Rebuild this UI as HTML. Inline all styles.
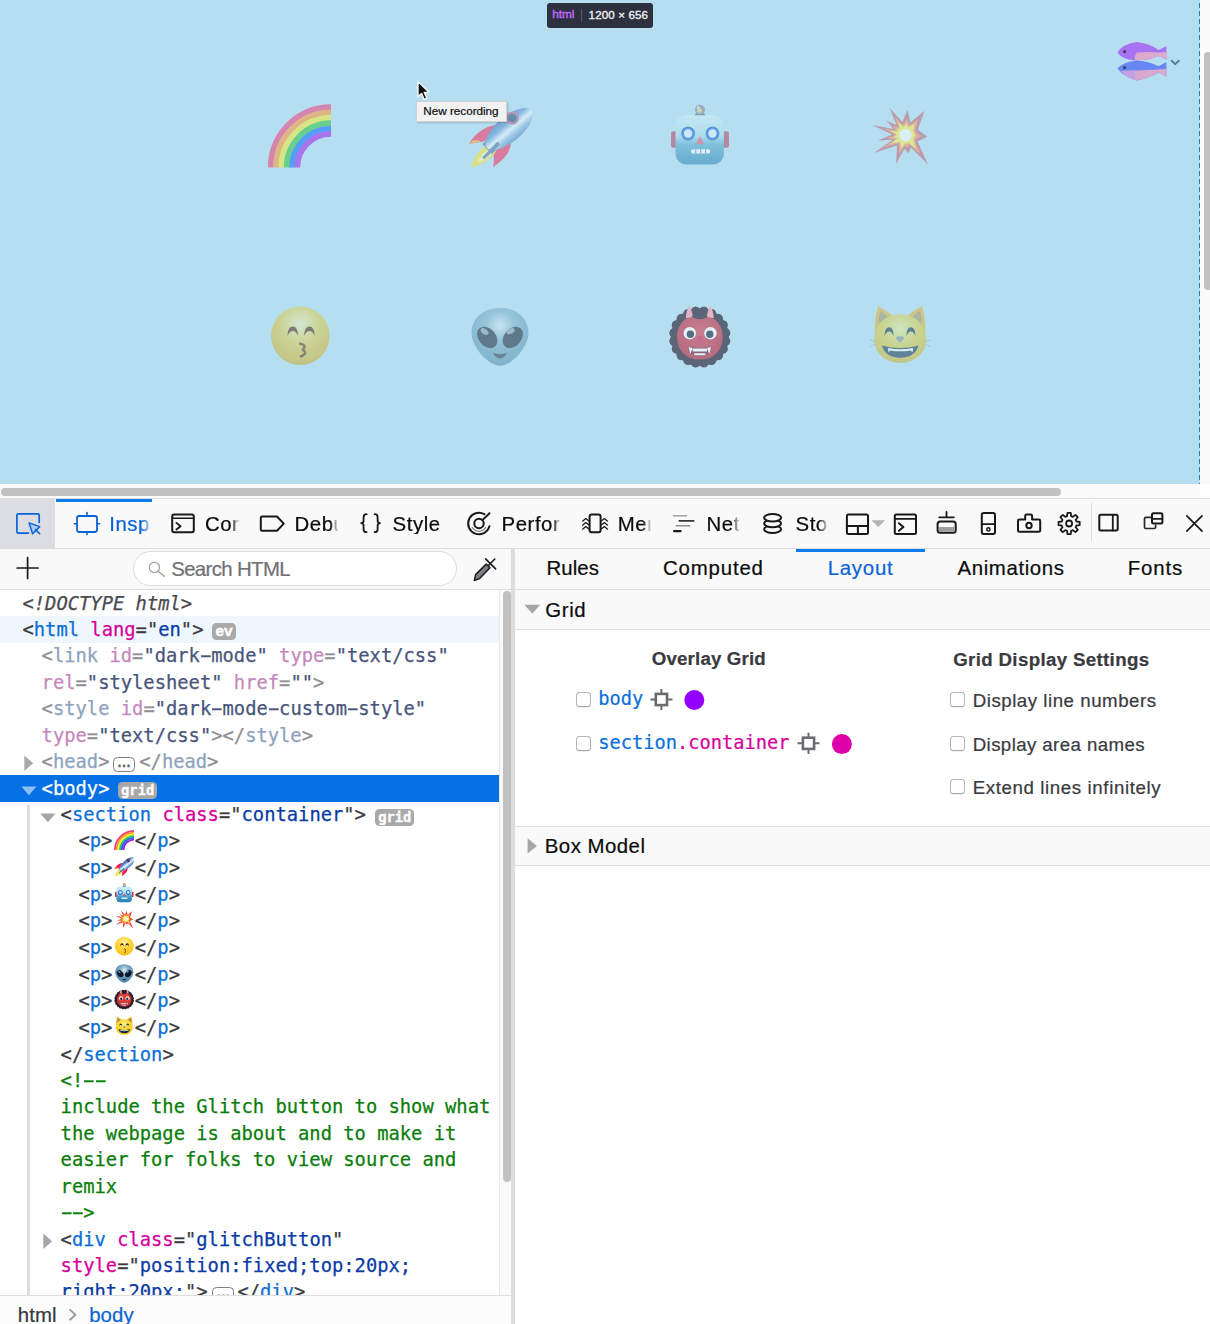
<!DOCTYPE html>
<html lang="en"><head><meta charset="utf-8"><title>Firefox DevTools - CSS Grid layout panel</title>
<style>
html,body{margin:0;padding:0}
body{width:1210px;height:1324px;position:relative;overflow:hidden;background:#fff;font-family:"Liberation Sans",sans-serif;color:#0c0c0d}
div,svg,span{box-sizing:border-box}
.a{position:absolute}
.t{position:absolute;white-space:nowrap;-webkit-text-stroke:.22px}
.m{font-family:"DejaVu Sans Mono","Liberation Mono",monospace}
.ln{position:absolute;white-space:nowrap;font-family:"DejaVu Sans Mono","Liberation Mono",monospace;font-size:18.8px;line-height:26px;height:26px;color:#3b3b41;-webkit-text-stroke:.25px}
.ln .g{color:#0a6fd8}.ln .n{color:#d8009c}.ln .v{color:#0a3aa6}
.ln.dim{color:#8f8f95}.ln.dim .g{color:#8da3bd}.ln.dim .n{color:#c588bc}.ln.dim .v{color:#48557a}
.ln.sel,.ln.sel .g{color:#fff}
.ln.cm{color:#0a7d0a}
.ln .h{display:inline-block;transform:scaleX(1.9)}
.ln.dt{font-style:italic;color:#4a4a50}
.em{display:inline-block;width:22.4px;height:22px;vertical-align:-4.5px;position:relative}
.em svg{position:absolute;left:1.2px;top:-.4px}
.em i{position:absolute;left:0;top:0;width:22px;height:22px;overflow:hidden;opacity:0;font-size:12px;line-height:22px;font-style:normal}
.bdg{position:absolute;background:#a9a9a9;color:#fff;border-radius:4.5px;font-weight:bold;text-align:center;white-space:nowrap}
.dots{position:absolute;border:1px solid #7d7d82;border-radius:4.5px;background:#fff;color:#5e5e64;font-family:"Liberation Sans",sans-serif;font-weight:bold;font-size:14px;line-height:9.4px;text-align:center;-webkit-text-stroke:.25px;overflow:hidden}
.cb{position:absolute;width:14.6px;height:14.8px;border:1px solid #b6b6b6;border-bottom-color:#a6a6a6;border-radius:3.5px;background:#fff;box-shadow:0 .5px .5px rgba(0,0,0,.12)}
</style></head><body>
<div class="a" style="left:0;top:0;width:1200px;height:484px;background:#fff;overflow:hidden">
<div class="a" style="left:0;top:0;width:1200px;height:484px;background:rgba(132,202,230,.6)"></div>
<div class="a" style="left:0;top:0;width:1200px;height:484px">
<svg class="a" style="left:268px;top:103.5px;opacity:0.56" width="64" height="64" viewBox="0 0 64 64"><path d="M2.67 63.5 A60.33 60.33 0 0 1 63 3.17" fill="none" stroke="#f0407c" stroke-width="5.63"/><path d="M8.00 63.5 A55.00 55.00 0 0 1 63 8.50" fill="none" stroke="#ff962f" stroke-width="5.63"/><path d="M13.33 63.5 A49.67 49.67 0 0 1 63 13.83" fill="none" stroke="#f4ea30" stroke-width="5.63"/><path d="M18.67 63.5 A44.33 44.33 0 0 1 63 19.17" fill="none" stroke="#2fc440" stroke-width="5.63"/><path d="M24.00 63.5 A39.00 39.00 0 0 1 63 24.50" fill="none" stroke="#0a6cff" stroke-width="5.63"/><path d="M29.33 63.5 A33.67 33.67 0 0 1 63 29.83" fill="none" stroke="#a020e8" stroke-width="5.63"/></svg>
<svg class="a" style="left:468px;top:103.5px;opacity:0.5" width="64" height="64" viewBox="0 0 64 64"><defs><linearGradient id="g1" gradientUnits="userSpaceOnUse" x1="41" y1="12.4" x2="41" y2="37.6"><stop offset="0" stop-color="#2f64b0"/><stop offset=".3" stop-color="#5f94d4"/><stop offset=".55" stop-color="#f4fbff"/><stop offset=".75" stop-color="#8fb8e0"/><stop offset="1" stop-color="#3f78c0"/></linearGradient></defs><path d="M20 40 Q5 50 3.4 63.4 Q17 60.5 27.5 49 Z" fill="#ffe21a"/><path d="M21 44 Q12 51 9.5 58.5 Q18 56 24.5 49.5 Z" fill="#fff9a8"/><path d="M27 21 Q10 24 0.6 40.6 Q8 37.6 14 38 Q19 34.6 24.5 35.5 Z" fill="#ff1850"/><path d="M0.6 40.6 Q8 37.6 14 38 Q9 35.5 5.5 36 Z" fill="#ffb020"/><path d="M43 37 Q43 52 25 63 Q26.5 56.5 25.6 51 Q29.5 47 28.6 41.5 Z" fill="#ff1850"/><path d="M18.4 35.4 L28.8 45.6 L24 50 L14.4 40.2 Z" fill="#5d6f88"/><ellipse cx="41" cy="25" rx="29" ry="12.6" transform="rotate(-40 41 25)" fill="url(#g1)"/><circle cx="44.4" cy="14" r="5.4" fill="#0a4668" stroke="#c0507c" stroke-width="2.4"/><path d="M29.5 37.5 L14 53.4 L16.6 55 L32 40.4 Z" fill="#4a6a98"/></svg>
<svg class="a" style="left:668px;top:103.5px;opacity:0.52" width="64" height="64" viewBox="0 0 64 64"><defs><linearGradient id="g2" x1="0" y1="0" x2="0" y2="1"><stop offset="0" stop-color="#d2f0f8"/><stop offset=".42" stop-color="#a8dcee"/><stop offset=".6" stop-color="#4fa4cc"/><stop offset="1" stop-color="#1f7eb0"/></linearGradient></defs><path d="M25 13.5 L28 9.3 H36 L39 13.5 Z" fill="#2f5f88"/><circle cx="32" cy="5.7" r="5" fill="#8c7f8c"/><circle cx="31.4" cy="6.6" r="2.4" fill="#e8d46a"/><circle cx="30.4" cy="3.6" r="1.5" fill="#d9d5de"/><rect x="3" y="27.2" width="7" height="16.6" rx="2.4" fill="#b43a56"/><rect x="54" y="27.2" width="7" height="16.6" rx="2.4" fill="#b43a56"/><rect x="7.5" y="11.3" width="48.4" height="49.1" rx="11" fill="url(#g2)"/><circle cx="20.1" cy="29.5" r="6.9" fill="#0e5a8a"/><circle cx="20.1" cy="29.5" r="6.1" fill="#0a5cff"/><circle cx="20.1" cy="29.5" r="4.2" fill="#e6f4ff"/><circle cx="44.5" cy="29.5" r="6.9" fill="#0e5a8a"/><circle cx="44.5" cy="29.5" r="6.1" fill="#0a5cff"/><circle cx="44.5" cy="29.5" r="4.2" fill="#e6f4ff"/><path d="M32 32 L36.2 40.2 H27.8 Z" fill="#d8566a"/><rect x="23" y="45.3" width="19.2" height="4.3" rx="2" fill="#ffffff"/><rect x="27.2" y="45.3" width="1.1" height="4.3" fill="#4f84ac"/><rect x="32.1" y="45.3" width="1.1" height="4.3" fill="#4f84ac"/><rect x="37" y="45.3" width="1.1" height="4.3" fill="#4f84ac"/></svg>
<svg class="a" style="left:868px;top:103.5px;opacity:0.5" width="64" height="64" viewBox="0 0 64 64"><path d="M21.4 3.7 L34.5 18.1 L39.5 5.7 L42.4 18.6 L56.5 6.8 L49.9 25.7 L59.4 32.8 L49.5 37.6 L60.1 60.6 L42.9 43.6 L40.5 49.5 L36.5 44.7 L28.0 59.9 L29.0 41.6 L5.9 49.0 L24.9 35.8 L9.9 36.5 L24.1 30.5 L4.2 20.9 L25.6 25.1 L18.1 16.6 L28.6 21.1 Z" fill="#c45a6c"/><path d="M26.9 13.0 L35.2 21.0 L38.9 14.4 L41.4 21.4 L50.1 15.1 L47.2 26.9 L52.0 32.3 L46.8 36.2 L52.5 50.6 L41.7 40.8 L39.5 43.3 L36.7 41.7 L31.3 50.1 L30.9 39.3 L16.7 42.9 L27.7 34.8 L19.3 34.7 L27.1 30.6 L15.6 24.4 L28.2 26.4 L24.7 21.6 L30.6 23.4 Z" fill="#ff8a50"/><path d="M30.1 18.5 L35.7 23.0 L38.5 19.5 L40.6 23.4 L46.3 20.0 L45.3 27.8 L47.6 31.9 L45.0 35.2 L48.0 44.7 L40.9 38.9 L38.9 39.6 L36.9 39.6 L33.2 44.4 L32.2 37.7 L23.0 39.4 L29.7 34.1 L24.9 33.6 L29.2 30.7 L22.2 26.5 L30.1 27.4 L28.6 24.5 L32.0 24.9 Z" fill="#fff23a"/><circle cx="37.6" cy="31.2" r="6.2" fill="#ffffff"/></svg>
<svg class="a" style="left:268px;top:304px;opacity:0.5" width="64" height="64" viewBox="0 0 64 64"><defs><radialGradient id="g3" cx=".5" cy=".3" r=".75"><stop offset="0" stop-color="#eef0b4"/><stop offset=".45" stop-color="#e0c83a"/><stop offset=".85" stop-color="#d4ae20"/><stop offset="1" stop-color="#b08414"/></radialGradient></defs><circle cx="32.3" cy="31.8" r="29.3" fill="url(#g3)"/><path d="M19.4 32 Q19.8 22.4 24.8 22.4 Q29.8 22.4 30.200000000000003 32 Q27.8 27 24.8 27 Q21.8 27 19.4 32 Z" fill="#4a1c00"/><path d="M36.0 32 Q36.4 22.4 41.4 22.4 Q46.4 22.4 46.8 32 Q44.4 27 41.4 27 Q38.4 27 36.0 32 Z" fill="#4a1c00"/><path d="M32 39.6 Q39.4 41 34.8 45.8 Q40.4 49.6 32.8 52.4" fill="none" stroke="#5a2600" stroke-width="2.4" stroke-linecap="round" stroke-linejoin="round"/></svg>
<svg class="a" style="left:468px;top:304px;opacity:0.5" width="64" height="64" viewBox="0 0 64 64"><defs><radialGradient id="g4" cx=".5" cy=".3" r=".7"><stop offset="0" stop-color="#dcecf4"/><stop offset=".35" stop-color="#78aac4"/><stop offset="1" stop-color="#4a86a6"/></radialGradient></defs><path d="M32 3.9 C50 3.9 60.4 15 60.4 29 C60.4 44 43 61.8 32 61.8 C21 61.8 3.6 44 3.6 29 C3.6 15 14 3.9 32 3.9 Z" fill="url(#g4)"/><ellipse cx="19.2" cy="33.4" rx="12" ry="8.6" transform="rotate(50 19.2 33.4)" fill="#0b1626"/><ellipse cx="44.8" cy="33.4" rx="12" ry="8.6" transform="rotate(-50 44.8 33.4)" fill="#0b1626"/><ellipse cx="16.6" cy="27.6" rx="4.4" ry="2.6" transform="rotate(35 16.6 27.6)" fill="#7f93a6"/><ellipse cx="42.6" cy="27.2" rx="4.4" ry="2.6" transform="rotate(-25 42.6 27.2)" fill="#7f93a6"/><path d="M24.7 48.5 Q32 52 39.3 48.5 Q36.4 54.4 32 54.4 Q27.6 54.4 24.7 48.5 Z" fill="#1c2b3c"/></svg>
<svg class="a" style="left:668px;top:304px;opacity:0.62" width="64" height="64" viewBox="0 0 64 64"><defs><radialGradient id="g5" cx=".5" cy=".4" r=".7"><stop offset="0" stop-color="#d84452"/><stop offset="1" stop-color="#b02238"/></radialGradient></defs><path d="M60.6 33.0 Q64.8 38.2 59.2 41.9 Q61.6 48.2 55.1 49.9 Q55.4 56.6 48.7 56.3 Q47.0 62.8 40.7 60.4 Q37.0 66.0 31.8 61.8 Q26.6 66.0 22.9 60.4 Q16.6 62.8 14.9 56.3 Q8.2 56.6 8.5 49.9 Q2.0 48.2 4.4 41.9 Q-1.2 38.2 3.0 33.0 Q-1.2 27.8 4.4 24.1 Q2.0 17.8 8.5 16.1 Q8.2 9.4 14.9 9.7 Q16.6 3.2 22.9 5.6 Q26.6 0.0 31.8 4.2 Q37.0 0.0 40.7 5.6 Q47.0 3.2 48.7 9.7 Q55.4 9.4 55.1 16.1 Q61.6 17.8 59.2 24.1 Q64.8 27.8 60.6 33.0 Z" fill="#241c30"/><path d="M31.8 11 C46 11 54.6 20 54.6 33 C54.6 47 45 55.6 31.8 55.6 C18.6 55.6 9 47 9 33 C9 20 17.6 11 31.8 11 Z" fill="url(#g5)"/><path d="M17.8 14 Q18.6 6 21 1.6 Q24 6 25 13 Z" fill="#ff9ab0"/><path d="M38.6 13 Q39.8 6 42.4 1.6 Q45 6 45.8 14 Z" fill="#ff9ab0"/><path d="M23.5 12.5 Q31.8 18 40 12.5 Q36 8.6 31.8 8.6 Q27.6 8.6 23.5 12.5 Z" fill="#241c30"/><circle cx="21.8" cy="29.2" r="6.2" fill="#fff"/><circle cx="22.4" cy="30.3" r="3.7" fill="#1c2c44"/><circle cx="42.4" cy="29.2" r="6.2" fill="#fff"/><circle cx="41.8" cy="30.3" r="3.7" fill="#1c2c44"/><path d="M29 33 Q31.8 30.6 34.6 33 Q35 39 31.8 39.6 Q28.6 39 29 33 Z" fill="#d42a50"/><path d="M19.5 42.2 Q31.8 45.8 44 42.2 Q43.4 52 31.8 52.4 Q20.2 52 19.5 42.2 Z" fill="#7a1834"/><path d="M20.4 43 L24.6 44 L22.4 50 Z" fill="#fff"/><path d="M43.2 43 L39 44 L41.2 50 Z" fill="#fff"/><rect x="24.6" y="44.6" width="14.4" height="3" rx=".8" fill="#fff"/><rect x="26" y="49.2" width="11.6" height="2" rx=".8" fill="#fff"/></svg>
<svg class="a" style="left:868px;top:304px;opacity:0.5" width="64" height="64" viewBox="0 0 64 64"><defs><radialGradient id="g6" cx=".5" cy=".3" r=".75"><stop offset="0" stop-color="#ecec98"/><stop offset=".5" stop-color="#dcc82e"/><stop offset=".9" stop-color="#d0b01c"/><stop offset="1" stop-color="#b08a14"/></radialGradient></defs><path d="M7 30 Q6.4 12 10.2 2.2 Q19 6.6 27 14 Z" fill="#e9a81c"/><path d="M57.2 30 Q57.8 12 53.8 2.2 Q45 6.6 37 14 Z" fill="#e9a81c"/><path d="M10.6 21 Q10.6 12 12.2 7 Q17 10 21 14 Z" fill="#9a8f56"/><path d="M53.6 21 Q53.6 12 52 7 Q47 10 43 14 Z" fill="#9a8f56"/><path d="M32.2 10.5 C47.5 10.5 58.2 20.5 58.2 35.5 C58.2 48.5 47.5 58.8 32.2 58.8 C16.9 58.8 6.2 48.5 6.2 35.5 C6.2 20.5 16.9 10.5 32.2 10.5 Z" fill="url(#g6)"/><path d="M16.5 32.2 Q16.700000000000003 23.2 21.1 23.2 Q25.5 23.2 25.700000000000003 32.2 Q23.700000000000003 27.4 21.1 27.4 Q18.5 27.4 16.5 32.2 Z" fill="#00283a"/><path d="M38.3 32.2 Q38.5 23.2 42.9 23.2 Q47.3 23.2 47.5 32.2 Q45.5 27.4 42.9 27.4 Q40.3 27.4 38.3 32.2 Z" fill="#00283a"/><path d="M28 33 Q32 31.4 36 33 Q36 36.4 32 38.4 Q28 36.4 28 33 Z" fill="#7d8e90"/><path d="M13.8 41.6 Q32 46.6 50.6 41.6 Q47 53.6 32.2 53.8 Q17.4 53.6 13.8 41.6 Z" fill="#0a2844"/><path d="M20 44 Q32.2 46.6 45 44 L44.6 48.4 L42.8 46.4 Q32.2 48.2 22.2 46.4 L20.6 48.4 Z" fill="#fff"/><path d="M7.5 37.6 L1.5 36 M7.5 40 L2.2 42.6 M57 37.6 L63 36 M57 40 L62.4 42.6" stroke="#8fa0a8" stroke-width=".8" fill="none"/></svg>
</div>
</div>
<div class="a" style="left:1199px;top:3px;width:1px;height:481px;background:repeating-linear-gradient(to bottom,#1b86bd 0,#1b86bd 5px,rgba(0,0,0,0) 5px,rgba(0,0,0,0) 8px)"></div>
<svg class="a" style="left:1110px;top:36px" width="76" height="50" viewBox="1110 36 76 50">
<path d="M1117.4 52.4 Q1122 44.4 1136.4 42 Q1150 43.6 1158.6 49.9 L1166.4 46.2 V59.8 L1158.8 56 Q1148 60.6 1134 60.2 Q1122.4 59.4 1117.4 52.4 Z" fill="#a873f3"/>
<path d="M1137 52.6 Q1150 51.6 1158.6 52.4 L1166.4 52 V59.8 L1158.8 56 Q1148 60.6 1135 60.2 Q1134 56 1137 52.6 Z" fill="#dcaacd"/>
<path d="M1117.4 68.6 Q1123 61.8 1137 60.4 Q1150 61.4 1158.6 66.2 L1166.4 62 V76.6 L1158.6 72.6 Q1150 78 1136.8 80.4 Q1124 77.4 1117.4 68.6 Z" fill="#6687f4"/>
<path d="M1120.5 71 Q1136 70.4 1158.6 69.4 L1166.4 69 V76.6 L1158.6 72.6 Q1150 78 1136.8 80.4 Q1126 78 1120.5 71 Z" fill="#d9a8cf"/>
<path d="M1120.5 71 Q1128 70.6 1135 70.4 Q1134 76 1136.8 80.4 Q1126 78 1120.5 71 Z" fill="#c3a0e4"/>
<circle cx="1124.6" cy="51.7" r="1.6" fill="#3c4260"/><circle cx="1124.6" cy="67.7" r="1.6" fill="#3c4260"/>
<path d="M1171.2 60.2 L1175.2 64.2 L1179.3 60.2" fill="none" stroke="#587d94" stroke-width="1.9"/>
</svg>
<div class="a" style="left:547px;top:3px;width:106px;height:25px;background:#2d303e;border-radius:3px"></div>
<div class="t" style="left:552.30px;top:9.21px;font-size:11.8px;line-height:11.8px;color:#c66bff;letter-spacing:-0.031px;-webkit-text-stroke:.35px #c66bff;">html</div>
<div class="a" style="left:581px;top:9px;width:1px;height:13px;background:#585a66"></div>
<div class="t" style="left:588.60px;top:9.38px;font-size:11.6px;line-height:11.6px;color:#eeeef0;letter-spacing:0.113px;-webkit-text-stroke:.35px #eeeef0;">1200 × 656</div>
<div class="a" style="left:416px;top:101px;width:90.6px;height:20.6px;background:#f2f2f2;border:1px solid rgba(0,0,0,.13);box-shadow:1px 1px 2px rgba(0,0,0,.18)"></div>
<div class="t" style="left:423.30px;top:105.10px;font-size:11.7px;line-height:11.7px;color:#111;letter-spacing:-0.003px;">New recording</div>
<svg class="a" style="left:412px;top:78px" width="24" height="26" viewBox="412 78 24 26"><path d="M418 81.6 L418 96.6 L421.6 93.4 L424.3 99.4 L426.9 98.2 L424.2 92.4 L429 92.2 Z" fill="#111" stroke="#fff" stroke-width="1.3" stroke-linejoin="round"/></svg>
<div class="a" style="left:1200px;top:0;width:10px;height:484px;background:#fafafa"></div>
<div class="a" style="left:1204px;top:52px;width:8px;height:238px;border-radius:4px;background:#c1c1c1"></div>
<div class="a" style="left:0;top:484px;width:1200px;height:14px;background:#fafafa"></div>
<div class="a" style="left:1px;top:488px;width:1060px;height:8px;border-radius:4px;background:#c1c1c1"></div>
<div class="a" style="left:0;top:498px;width:1210px;height:51px;background:#f9f9fa;border-top:1px solid #dddde0;border-bottom:1px solid #dddde0"></div>
<div class="a" style="left:0;top:499px;width:55px;height:49px;background:#dcdde2"></div>
<div class="a" style="left:56px;top:499px;width:96px;height:3px;background:#0a7cf0"></div>
<div class="t" style="left:109.20px;top:513.93px;font-size:20.4px;line-height:20.4px;color:#0b63d6;letter-spacing:0.550px;width:42.8px;overflow:hidden;-webkit-mask-image:linear-gradient(to right,#000 33.8px,transparent 42.8px);mask-image:linear-gradient(to right,#000 33.8px,transparent 42.8px);">Inspector</div>
<div class="t" style="left:204.90px;top:513.93px;font-size:20.4px;line-height:20.4px;color:#0c0c0d;letter-spacing:0.550px;width:35.1px;overflow:hidden;-webkit-mask-image:linear-gradient(to right,#000 26.1px,transparent 35.1px);mask-image:linear-gradient(to right,#000 26.1px,transparent 35.1px);">Console</div>
<div class="t" style="left:294.50px;top:513.93px;font-size:20.4px;line-height:20.4px;color:#0c0c0d;letter-spacing:0.550px;width:44.0px;overflow:hidden;-webkit-mask-image:linear-gradient(to right,#000 35.0px,transparent 44.0px);mask-image:linear-gradient(to right,#000 35.0px,transparent 44.0px);">Debugger</div>
<div class="t" style="left:392.60px;top:513.93px;font-size:20.4px;line-height:20.4px;color:#0c0c0d;letter-spacing:0.550px;width:53.4px;overflow:hidden;-webkit-mask-image:linear-gradient(to right,#000 44.4px,transparent 53.4px);mask-image:linear-gradient(to right,#000 44.4px,transparent 53.4px);">Style Editor</div>
<div class="t" style="left:501.50px;top:513.93px;font-size:20.4px;line-height:20.4px;color:#0c0c0d;letter-spacing:0.550px;width:59.5px;overflow:hidden;-webkit-mask-image:linear-gradient(to right,#000 50.5px,transparent 59.5px);mask-image:linear-gradient(to right,#000 50.5px,transparent 59.5px);">Performance</div>
<div class="t" style="left:617.80px;top:513.93px;font-size:20.4px;line-height:20.4px;color:#0c0c0d;letter-spacing:0.550px;width:33.7px;overflow:hidden;-webkit-mask-image:linear-gradient(to right,#000 24.7px,transparent 33.7px);mask-image:linear-gradient(to right,#000 24.7px,transparent 33.7px);">Memory</div>
<div class="t" style="left:706.50px;top:513.93px;font-size:20.4px;line-height:20.4px;color:#0c0c0d;letter-spacing:0.550px;width:33.5px;overflow:hidden;-webkit-mask-image:linear-gradient(to right,#000 24.5px,transparent 33.5px);mask-image:linear-gradient(to right,#000 24.5px,transparent 33.5px);">Network</div>
<div class="t" style="left:795.50px;top:513.93px;font-size:20.4px;line-height:20.4px;color:#0c0c0d;letter-spacing:0.550px;width:32.5px;overflow:hidden;-webkit-mask-image:linear-gradient(to right,#000 23.5px,transparent 32.5px);mask-image:linear-gradient(to right,#000 23.5px,transparent 32.5px);">Storage</div>
<svg class="a" style="left:0;top:498px" width="1210" height="52" viewBox="0 498 1210 52" fill="none" stroke-linecap="round" stroke-linejoin="round">
<path d="M28.4 533.2 H18.3 Q16.9 533.2 16.9 531.8 V515.3 Q16.9 513.9 18.3 513.9 H37.8 Q39.2 513.9 39.2 515.3 V522.4" stroke="#0a63d8" stroke-width="1.7"/>
<path d="M29.1 522.9 L39.7 526.6 L32.6 533.7 Z" fill="#a9caf4" stroke="#0a63d8" stroke-width="1.5"/><path d="M35.6 529.6 L39.7 533.7" stroke="#0a63d8" stroke-width="1.6"/>
<rect x="77" y="516" width="20" height="16" rx="2.2" stroke="#0a63d8" stroke-width="1.8"/>
<path d="M87 512.6 V516 M87 532 V534.6 M74.2 523.8 H77 M97 523.8 H99.6" stroke="#0a63d8" stroke-width="1.6"/>
<rect x="172.2" y="514.6" width="21.6" height="17.7" rx="2" stroke="#18181a" stroke-width="2"/>
<path d="M172.5 518.2 H193.5" stroke="#18181a" stroke-width="1.5"/><path d="M176.4 522.9 L180.6 526.2 L176.4 529.5" stroke="#18181a" stroke-width="1.8"/>
<path d="M262.2 516.5 H277 L283.8 523.65 L277 530.8 H262.2 Q260.8 530.8 260.8 529.4 V517.9 Q260.8 516.5 262.2 516.5 Z" stroke="#18181a" stroke-width="2"/>
<path d="M366.6 514.2 Q363.6 514.2 363.6 517 V520.4 Q363.6 523.1 361.2 523.1 Q363.6 523.1 363.6 525.8 V529.4 Q363.6 532.1 366.6 532.1" stroke="#18181a" stroke-width="1.8"/>
<path d="M374.6 514.2 Q377.6 514.2 377.6 517 V520.4 Q377.6 523.1 380 523.1 Q377.6 523.1 377.6 525.8 V529.4 Q377.6 532.1 374.6 532.1" stroke="#18181a" stroke-width="1.8"/>
<path d="M484.4 514.15 A10.8 10.8 0 1 0 489.4 526.3" stroke="#18181a" stroke-width="2"/>
<circle cx="479.0" cy="523.5" r="4.7" stroke="#18181a" stroke-width="2"/>
<path d="M482.4 520.1 L489.5 513.3" stroke="#18181a" stroke-width="2"/>
<path d="M472.3 527.5 A7.8 7.8 0 0 0 485.7 527.5" stroke="#7d7d80" stroke-width="1.3"/>
<rect x="589.6" y="514.6" width="11" height="17.6" rx="2" stroke="#18181a" stroke-width="2"/>
<path d="M582.6 521.2 L585.8 518.6 L588.6 520.8 M601.6 520.8 L604.4 518.6 L607.6 521.2" stroke="#18181a" stroke-width="1.25"/>
<path d="M582.6 525.2 L585.8 522.6 L588.6 524.8 M601.6 524.8 L604.4 522.6 L607.6 525.2" stroke="#18181a" stroke-width="1.25"/>
<path d="M582.6 529.2 L585.8 526.6 L588.6 528.8 M601.6 528.8 L604.4 526.6 L607.6 529.2" stroke="#18181a" stroke-width="1.25"/>
<path d="M673.6 515.9 H686.4" stroke="#909092" stroke-width="1.4"/><path d="M679.2 520.9 H693.8" stroke="#38383a" stroke-width="1.6"/><path d="M676.2 525.8 H689.8" stroke="#909092" stroke-width="1.4"/>
<path d="M674 531.1 H680.6" stroke="#18181a" stroke-width="2.2"/>
<ellipse cx="772.6" cy="529.3" rx="8.5" ry="3.7" fill="#f9f9fa" stroke="#18181a" stroke-width="2"/>
<ellipse cx="772.6" cy="523.5" rx="8.5" ry="3.7" fill="#f9f9fa" stroke="#18181a" stroke-width="2"/>
<ellipse cx="772.6" cy="517.7" rx="8.5" ry="3.7" fill="#f9f9fa" stroke="#18181a" stroke-width="2"/>
<rect x="846.9" y="514.6" width="21.1" height="19.4" rx="1.5" stroke="#18181a" stroke-width="2"/><path d="M847 526 H868 M857.9 526 V534" stroke="#18181a" stroke-width="2"/>
<path d="M871.5 520.2 H885.2 L878.35 527 Z" fill="#b3b3b5"/>
<rect x="894.8" y="514.6" width="21.2" height="19.4" rx="1.5" stroke="#18181a" stroke-width="2"/><path d="M895 518.9 H916" stroke="#18181a" stroke-width="1.6"/><path d="M898.9 523.2 L903.4 527 L898.9 530.8" stroke="#18181a" stroke-width="2"/>
<path d="M946.5 511.9 V517.3 M939.2 517.3 H953.8" stroke="#18181a" stroke-width="1.8"/><rect x="937.6" y="521.4" width="18.1" height="11.4" rx="2.6" stroke="#18181a" stroke-width="2"/><rect x="939" y="527" width="15.4" height="4.6" fill="#9d9da0"/>
<rect x="981.8" y="513.1" width="13.2" height="20.9" rx="2" stroke="#18181a" stroke-width="2"/><path d="M982 524.1 H995" stroke="#18181a" stroke-width="1.8"/><circle cx="988.4" cy="529.4" r="1.6" stroke="#18181a" stroke-width="1.5"/>
<path d="M1019.4 519.6 H1025.2 V516.1 Q1025.2 514.6 1026.7 514.6 H1030.6 Q1032.1 514.6 1032.1 516.1 V519.6 H1038.8 Q1040.2 519.6 1040.2 521 V530.4 Q1040.2 531.8 1038.8 531.8 H1019.4 Q1018 531.8 1018 530.4 V521 Q1018 519.6 1019.4 519.6 Z" stroke="#18181a" stroke-width="2"/><circle cx="1029" cy="525.5" r="2.7" stroke="#18181a" stroke-width="2"/>
<path d="M1067.09 516.17 L1067.43 512.93 L1070.77 512.93 L1071.11 516.17 L1072.87 516.90 L1075.39 514.84 L1077.76 517.21 L1075.70 519.73 L1076.43 521.49 L1079.67 521.83 L1079.67 525.17 L1076.43 525.51 L1075.70 527.27 L1077.76 529.79 L1075.39 532.16 L1072.87 530.10 L1071.11 530.83 L1070.77 534.07 L1067.43 534.07 L1067.09 530.83 L1065.33 530.10 L1062.81 532.16 L1060.44 529.79 L1062.50 527.27 L1061.77 525.51 L1058.53 525.17 L1058.53 521.83 L1061.77 521.49 L1062.50 519.73 L1060.44 517.21 L1062.81 514.84 L1065.33 516.90 Z" stroke="#18181a" stroke-width="1.8"/><circle cx="1069.1" cy="523.5" r="3" stroke="#18181a" stroke-width="1.8"/>
<path d="M1091.5 503 V541" stroke="#dcdcde" stroke-width="1" stroke-linecap="butt"/>
<rect x="1099.3" y="514.8" width="18.4" height="15.8" rx="1.5" stroke="#18181a" stroke-width="2"/><path d="M1112.8 515 V530.4" stroke="#18181a" stroke-width="1.8"/>
<path d="M1150.4 517.4 H1145.8 Q1144.5 517.4 1144.5 518.7 V527.2 Q1144.5 528.5 1145.8 528.5 H1154.3 Q1155.6 528.5 1155.6 527.2 V525" stroke="#2a2a2c" stroke-width="1.7"/>
<rect x="1152" y="513.2" width="10.4" height="10.2" rx="1.5" stroke="#18181a" stroke-width="2"/><path d="M1152.2 518.9 H1162.2" stroke="#18181a" stroke-width="1.7"/>
<path d="M1186.8 515.8 L1202 531.1 M1202 515.8 L1186.8 531.1" stroke="#18181a" stroke-width="1.7"/>
</svg>
<div class="a" style="left:0;top:549px;width:511px;height:41px;background:#f9f9fa;border-bottom:1px solid #dddde0"></div>
<div class="a" style="left:132.5px;top:550.5px;width:324px;height:35px;border:1px solid #dcdcde;border-radius:17.5px;background:#fff"></div>
<div class="t" style="left:171.20px;top:558.73px;font-size:20.4px;line-height:20.4px;color:#707075;letter-spacing:-0.634px;">Search HTML</div>
<svg class="a" style="left:0;top:549px" width="511" height="40" viewBox="0 549 511 40" fill="none" stroke-linecap="round" stroke-linejoin="round">
<path d="M17.2 568 H38 M27.6 557.6 V578.4" stroke="#18181a" stroke-width="1.7"/>
<circle cx="154.4" cy="567.4" r="5.1" stroke="#a2a2a6" stroke-width="1.2"/><path d="M158.2 571.4 L164.3 576.2" stroke="#a2a2a6" stroke-width="1.4"/>
<path d="M474.3 580.6 L475.6 574.6 L486.2 564 L490 567.8 L479.6 578.6 Z" fill="#7f7f82" stroke="#18181a" stroke-width="1.5"/>
<path d="M485.6 558.9 L495.6 568.9 M494.8 559 L488.2 565.8" stroke="#18181a" stroke-width="1.6"/>
</svg>
<div class="a" style="left:0;top:590px;width:499px;height:705px;overflow:hidden;background:#fff">
<div class="a" style="left:0;top:26.2px;width:499px;height:26.4px;background:#eff7fe"></div>
<div class="a" style="left:0;top:184.9px;width:499px;height:26.9px;background:#0671e4"></div>
<div class="a" style="left:27.2px;top:215px;width:2.6px;height:500px;background:#dedede"></div>
<div class="ln dt" style="left:22.5px;top:0.63px">&lt;!DOCTYPE html&gt;</div>
<div class="ln " style="left:22.5px;top:27.05px">&lt;<span class="g">html</span> <span class="n">lang</span>="<span class="v">en</span>"&gt;</div>
<div class="bdg" style="left:212px;top:32.9px;width:24px;height:17px;font-size:15.3px;line-height:16px;letter-spacing:-.1px;-webkit-text-stroke:.35px">ev</div>
<div class="ln dim" style="left:41.6px;top:53.48px">&lt;<span class="g">link</span> <span class="n">id</span>=<span class="v">"dark<span class="h">-</span>mode"</span> <span class="n">type</span>=<span class="v">"text/css"</span></div>
<div class="ln dim" style="left:41.6px;top:79.90px"><span class="n">rel</span>=<span class="v">"stylesheet"</span> <span class="n">href</span>=<span class="v">""</span>&gt;</div>
<div class="ln dim" style="left:41.6px;top:106.33px">&lt;<span class="g">style</span> <span class="n">id</span>=<span class="v">"dark<span class="h">-</span>mode<span class="h">-</span>custom<span class="h">-</span>style"</span></div>
<div class="ln dim" style="left:41.6px;top:132.75px"><span class="n">type</span>=<span class="v">"text/css"</span>&gt;&lt;/<span class="g">style</span>&gt;</div>
<div class="ln dim" style="left:41.6px;top:159.18px">&lt;<span class="g">head</span>&gt;<span style="display:inline-block;width:29.8px"></span>&lt;/<span class="g">head</span>&gt;</div>
<svg class="a" style="left:23.9px;top:165.4px" width="10" height="17" viewBox="0 0 10 17"><path d="M0.3 0.4 L9.2 8.2 L0.3 16 Z" fill="#a9a9a9"/></svg>
<div class="dots" style="left:113.1px;top:166.5px;width:21.8px;height:15px">…</div>
<div class="ln sel" style="left:41.6px;top:185.61px">&lt;body&gt;</div>
<svg class="a" style="left:20.6px;top:196.1px" width="16" height="10" viewBox="0 0 16 10"><path d="M0.3 0.6 L15.5 0.6 L7.9 9.2 Z" fill="#8ebdf3"/></svg>
<div class="bdg m" style="left:118.2px;top:192.1px;width:39px;height:17.2px;font-size:13.8px;line-height:17.4px;-webkit-text-stroke:.3px;background:#a8a8a8;color:#fff">grid</div>
<div class="ln " style="left:60.6px;top:212.03px">&lt;<span class="g">section</span> <span class="n">class</span>="<span class="v">container</span>"&gt;</div>
<svg class="a" style="left:39.6px;top:222.5px" width="16" height="10" viewBox="0 0 16 10"><path d="M0.3 0.6 L15.5 0.6 L7.9 9.2 Z" fill="#a6a6a6"/></svg>
<div class="bdg m" style="left:375.3px;top:218.6px;width:39px;height:17.2px;font-size:13.8px;line-height:17.4px;-webkit-text-stroke:.3px">grid</div>
<div class="ln " style="left:78.4px;top:238.46px">&lt;<span class="g">p</span>&gt;<span class="em"><svg width="20.5" height="20.5" viewBox="0 0 64 64"><path d="M2.67 63.5 A60.33 60.33 0 0 1 63 3.17" fill="none" stroke="#f0407c" stroke-width="5.63"/><path d="M8.00 63.5 A55.00 55.00 0 0 1 63 8.50" fill="none" stroke="#ff962f" stroke-width="5.63"/><path d="M13.33 63.5 A49.67 49.67 0 0 1 63 13.83" fill="none" stroke="#f4ea30" stroke-width="5.63"/><path d="M18.67 63.5 A44.33 44.33 0 0 1 63 19.17" fill="none" stroke="#2fc440" stroke-width="5.63"/><path d="M24.00 63.5 A39.00 39.00 0 0 1 63 24.50" fill="none" stroke="#0a6cff" stroke-width="5.63"/><path d="M29.33 63.5 A33.67 33.67 0 0 1 63 29.83" fill="none" stroke="#a020e8" stroke-width="5.63"/></svg><i>🌈</i></span>&lt;/<span class="g">p</span>&gt;</div>
<div class="ln " style="left:78.4px;top:265.10px">&lt;<span class="g">p</span>&gt;<span class="em"><svg width="20.5" height="20.5" viewBox="0 0 64 64"><defs><linearGradient id="g7" gradientUnits="userSpaceOnUse" x1="41" y1="12.4" x2="41" y2="37.6"><stop offset="0" stop-color="#2f64b0"/><stop offset=".3" stop-color="#5f94d4"/><stop offset=".55" stop-color="#f4fbff"/><stop offset=".75" stop-color="#8fb8e0"/><stop offset="1" stop-color="#3f78c0"/></linearGradient></defs><path d="M20 40 Q5 50 3.4 63.4 Q17 60.5 27.5 49 Z" fill="#ffe21a"/><path d="M21 44 Q12 51 9.5 58.5 Q18 56 24.5 49.5 Z" fill="#fff9a8"/><path d="M27 21 Q10 24 0.6 40.6 Q8 37.6 14 38 Q19 34.6 24.5 35.5 Z" fill="#ff1850"/><path d="M0.6 40.6 Q8 37.6 14 38 Q9 35.5 5.5 36 Z" fill="#ffb020"/><path d="M43 37 Q43 52 25 63 Q26.5 56.5 25.6 51 Q29.5 47 28.6 41.5 Z" fill="#ff1850"/><path d="M18.4 35.4 L28.8 45.6 L24 50 L14.4 40.2 Z" fill="#5d6f88"/><ellipse cx="41" cy="25" rx="29" ry="12.6" transform="rotate(-40 41 25)" fill="url(#g7)"/><circle cx="44.4" cy="14" r="5.4" fill="#0a4668" stroke="#c0507c" stroke-width="2.4"/><path d="M29.5 37.5 L14 53.4 L16.6 55 L32 40.4 Z" fill="#4a6a98"/></svg><i>🚀</i></span>&lt;/<span class="g">p</span>&gt;</div>
<div class="ln " style="left:78.4px;top:291.75px">&lt;<span class="g">p</span>&gt;<span class="em"><svg width="20.5" height="20.5" viewBox="0 0 64 64"><defs><linearGradient id="g8" x1="0" y1="0" x2="0" y2="1"><stop offset="0" stop-color="#d2f0f8"/><stop offset=".42" stop-color="#a8dcee"/><stop offset=".6" stop-color="#4fa4cc"/><stop offset="1" stop-color="#1f7eb0"/></linearGradient></defs><path d="M25 13.5 L28 9.3 H36 L39 13.5 Z" fill="#2f5f88"/><circle cx="32" cy="5.7" r="5" fill="#8c7f8c"/><circle cx="31.4" cy="6.6" r="2.4" fill="#e8d46a"/><circle cx="30.4" cy="3.6" r="1.5" fill="#d9d5de"/><rect x="3" y="27.2" width="7" height="16.6" rx="2.4" fill="#b43a56"/><rect x="54" y="27.2" width="7" height="16.6" rx="2.4" fill="#b43a56"/><rect x="7.5" y="11.3" width="48.4" height="49.1" rx="11" fill="url(#g8)"/><circle cx="20.1" cy="29.5" r="6.9" fill="#0e5a8a"/><circle cx="20.1" cy="29.5" r="6.1" fill="#0a5cff"/><circle cx="20.1" cy="29.5" r="4.2" fill="#e6f4ff"/><circle cx="44.5" cy="29.5" r="6.9" fill="#0e5a8a"/><circle cx="44.5" cy="29.5" r="6.1" fill="#0a5cff"/><circle cx="44.5" cy="29.5" r="4.2" fill="#e6f4ff"/><path d="M32 32 L36.2 40.2 H27.8 Z" fill="#d8566a"/><rect x="23" y="45.3" width="19.2" height="4.3" rx="2" fill="#ffffff"/><rect x="27.2" y="45.3" width="1.1" height="4.3" fill="#4f84ac"/><rect x="32.1" y="45.3" width="1.1" height="4.3" fill="#4f84ac"/><rect x="37" y="45.3" width="1.1" height="4.3" fill="#4f84ac"/></svg><i>🤖</i></span>&lt;/<span class="g">p</span>&gt;</div>
<div class="ln " style="left:78.4px;top:318.39px">&lt;<span class="g">p</span>&gt;<span class="em"><svg width="20.5" height="20.5" viewBox="0 0 64 64"><path d="M21.4 3.7 L34.5 18.1 L39.5 5.7 L42.4 18.6 L56.5 6.8 L49.9 25.7 L59.4 32.8 L49.5 37.6 L60.1 60.6 L42.9 43.6 L40.5 49.5 L36.5 44.7 L28.0 59.9 L29.0 41.6 L5.9 49.0 L24.9 35.8 L9.9 36.5 L24.1 30.5 L4.2 20.9 L25.6 25.1 L18.1 16.6 L28.6 21.1 Z" fill="#e8382e"/><path d="M26.9 13.0 L35.2 21.0 L38.9 14.4 L41.4 21.4 L50.1 15.1 L47.2 26.9 L52.0 32.3 L46.8 36.2 L52.5 50.6 L41.7 40.8 L39.5 43.3 L36.7 41.7 L31.3 50.1 L30.9 39.3 L16.7 42.9 L27.7 34.8 L19.3 34.7 L27.1 30.6 L15.6 24.4 L28.2 26.4 L24.7 21.6 L30.6 23.4 Z" fill="#ff8a50"/><path d="M30.1 18.5 L35.7 23.0 L38.5 19.5 L40.6 23.4 L46.3 20.0 L45.3 27.8 L47.6 31.9 L45.0 35.2 L48.0 44.7 L40.9 38.9 L38.9 39.6 L36.9 39.6 L33.2 44.4 L32.2 37.7 L23.0 39.4 L29.7 34.1 L24.9 33.6 L29.2 30.7 L22.2 26.5 L30.1 27.4 L28.6 24.5 L32.0 24.9 Z" fill="#fff23a"/><circle cx="37.6" cy="31.2" r="6.2" fill="#ffffff"/></svg><i>💥</i></span>&lt;/<span class="g">p</span>&gt;</div>
<div class="ln " style="left:78.4px;top:345.03px">&lt;<span class="g">p</span>&gt;<span class="em"><svg width="20.5" height="20.5" viewBox="0 0 64 64"><defs><radialGradient id="g9" cx=".5" cy=".3" r=".75"><stop offset="0" stop-color="#fff3a0"/><stop offset=".45" stop-color="#ffd63a"/><stop offset=".85" stop-color="#ffc21c"/><stop offset="1" stop-color="#e89a10"/></radialGradient></defs><circle cx="32.3" cy="31.8" r="29.3" fill="url(#g9)"/><path d="M19.4 32 Q19.8 22.4 24.8 22.4 Q29.8 22.4 30.200000000000003 32 Q27.8 27 24.8 27 Q21.8 27 19.4 32 Z" fill="#4a1c00"/><path d="M36.0 32 Q36.4 22.4 41.4 22.4 Q46.4 22.4 46.8 32 Q44.4 27 41.4 27 Q38.4 27 36.0 32 Z" fill="#4a1c00"/><path d="M32 39.6 Q39.4 41 34.8 45.8 Q40.4 49.6 32.8 52.4" fill="none" stroke="#5a2600" stroke-width="2.4" stroke-linecap="round" stroke-linejoin="round"/></svg><i>😙</i></span>&lt;/<span class="g">p</span>&gt;</div>
<div class="ln " style="left:78.4px;top:371.68px">&lt;<span class="g">p</span>&gt;<span class="em"><svg width="20.5" height="20.5" viewBox="0 0 64 64"><defs><radialGradient id="g10" cx=".5" cy=".3" r=".7"><stop offset="0" stop-color="#dcecf4"/><stop offset=".35" stop-color="#78aac4"/><stop offset="1" stop-color="#4a86a6"/></radialGradient></defs><path d="M32 3.9 C50 3.9 60.4 15 60.4 29 C60.4 44 43 61.8 32 61.8 C21 61.8 3.6 44 3.6 29 C3.6 15 14 3.9 32 3.9 Z" fill="url(#g10)"/><ellipse cx="19.2" cy="33.4" rx="12" ry="8.6" transform="rotate(50 19.2 33.4)" fill="#0b1626"/><ellipse cx="44.8" cy="33.4" rx="12" ry="8.6" transform="rotate(-50 44.8 33.4)" fill="#0b1626"/><ellipse cx="16.6" cy="27.6" rx="4.4" ry="2.6" transform="rotate(35 16.6 27.6)" fill="#7f93a6"/><ellipse cx="42.6" cy="27.2" rx="4.4" ry="2.6" transform="rotate(-25 42.6 27.2)" fill="#7f93a6"/><path d="M24.7 48.5 Q32 52 39.3 48.5 Q36.4 54.4 32 54.4 Q27.6 54.4 24.7 48.5 Z" fill="#1c2b3c"/></svg><i>👽</i></span>&lt;/<span class="g">p</span>&gt;</div>
<div class="ln " style="left:78.4px;top:398.33px">&lt;<span class="g">p</span>&gt;<span class="em"><svg width="20.5" height="20.5" viewBox="0 0 64 64"><defs><radialGradient id="g11" cx=".5" cy=".4" r=".7"><stop offset="0" stop-color="#e8483c"/><stop offset="1" stop-color="#c42a22"/></radialGradient></defs><path d="M60.6 33.0 Q64.8 38.2 59.2 41.9 Q61.6 48.2 55.1 49.9 Q55.4 56.6 48.7 56.3 Q47.0 62.8 40.7 60.4 Q37.0 66.0 31.8 61.8 Q26.6 66.0 22.9 60.4 Q16.6 62.8 14.9 56.3 Q8.2 56.6 8.5 49.9 Q2.0 48.2 4.4 41.9 Q-1.2 38.2 3.0 33.0 Q-1.2 27.8 4.4 24.1 Q2.0 17.8 8.5 16.1 Q8.2 9.4 14.9 9.7 Q16.6 3.2 22.9 5.6 Q26.6 0.0 31.8 4.2 Q37.0 0.0 40.7 5.6 Q47.0 3.2 48.7 9.7 Q55.4 9.4 55.1 16.1 Q61.6 17.8 59.2 24.1 Q64.8 27.8 60.6 33.0 Z" fill="#241c30"/><path d="M31.8 11 C46 11 54.6 20 54.6 33 C54.6 47 45 55.6 31.8 55.6 C18.6 55.6 9 47 9 33 C9 20 17.6 11 31.8 11 Z" fill="url(#g11)"/><path d="M17.8 14 Q18.6 6 21 1.6 Q24 6 25 13 Z" fill="#ff9ab0"/><path d="M38.6 13 Q39.8 6 42.4 1.6 Q45 6 45.8 14 Z" fill="#ff9ab0"/><path d="M23.5 12.5 Q31.8 18 40 12.5 Q36 8.6 31.8 8.6 Q27.6 8.6 23.5 12.5 Z" fill="#241c30"/><circle cx="21.8" cy="29.2" r="6.2" fill="#fff"/><circle cx="22.4" cy="30.3" r="3.7" fill="#1c2c44"/><circle cx="42.4" cy="29.2" r="6.2" fill="#fff"/><circle cx="41.8" cy="30.3" r="3.7" fill="#1c2c44"/><path d="M29 33 Q31.8 30.6 34.6 33 Q35 39 31.8 39.6 Q28.6 39 29 33 Z" fill="#d42a50"/><path d="M19.5 42.2 Q31.8 45.8 44 42.2 Q43.4 52 31.8 52.4 Q20.2 52 19.5 42.2 Z" fill="#7a1834"/><path d="M20.4 43 L24.6 44 L22.4 50 Z" fill="#fff"/><path d="M43.2 43 L39 44 L41.2 50 Z" fill="#fff"/><rect x="24.6" y="44.6" width="14.4" height="3" rx=".8" fill="#fff"/><rect x="26" y="49.2" width="11.6" height="2" rx=".8" fill="#fff"/></svg><i>👹</i></span>&lt;/<span class="g">p</span>&gt;</div>
<div class="ln " style="left:78.4px;top:424.97px">&lt;<span class="g">p</span>&gt;<span class="em"><svg width="20.5" height="20.5" viewBox="0 0 64 64"><defs><radialGradient id="g12" cx=".5" cy=".3" r=".75"><stop offset="0" stop-color="#fff08a"/><stop offset=".5" stop-color="#ffd42a"/><stop offset=".9" stop-color="#ffc418"/><stop offset="1" stop-color="#e8a010"/></radialGradient></defs><path d="M7 30 Q6.4 12 10.2 2.2 Q19 6.6 27 14 Z" fill="#e9a81c"/><path d="M57.2 30 Q57.8 12 53.8 2.2 Q45 6.6 37 14 Z" fill="#e9a81c"/><path d="M10.6 21 Q10.6 12 12.2 7 Q17 10 21 14 Z" fill="#9a8f56"/><path d="M53.6 21 Q53.6 12 52 7 Q47 10 43 14 Z" fill="#9a8f56"/><path d="M32.2 10.5 C47.5 10.5 58.2 20.5 58.2 35.5 C58.2 48.5 47.5 58.8 32.2 58.8 C16.9 58.8 6.2 48.5 6.2 35.5 C6.2 20.5 16.9 10.5 32.2 10.5 Z" fill="url(#g12)"/><path d="M16.5 32.2 Q16.700000000000003 23.2 21.1 23.2 Q25.5 23.2 25.700000000000003 32.2 Q23.700000000000003 27.4 21.1 27.4 Q18.5 27.4 16.5 32.2 Z" fill="#00283a"/><path d="M38.3 32.2 Q38.5 23.2 42.9 23.2 Q47.3 23.2 47.5 32.2 Q45.5 27.4 42.9 27.4 Q40.3 27.4 38.3 32.2 Z" fill="#00283a"/><path d="M28 33 Q32 31.4 36 33 Q36 36.4 32 38.4 Q28 36.4 28 33 Z" fill="#7d8e90"/><path d="M13.8 41.6 Q32 46.6 50.6 41.6 Q47 53.6 32.2 53.8 Q17.4 53.6 13.8 41.6 Z" fill="#0a2844"/><path d="M20 44 Q32.2 46.6 45 44 L44.6 48.4 L42.8 46.4 Q32.2 48.2 22.2 46.4 L20.6 48.4 Z" fill="#fff"/><path d="M7.5 37.6 L1.5 36 M7.5 40 L2.2 42.6 M57 37.6 L63 36 M57 40 L62.4 42.6" stroke="#8fa0a8" stroke-width=".8" fill="none"/></svg><i>😸</i></span>&lt;/<span class="g">p</span>&gt;</div>
<div class="ln " style="left:60.6px;top:451.62px">&lt;/<span class="g">section</span>&gt;</div>
<div class="ln cm" style="left:60.6px;top:478.04px">&lt;!<span class="h">-</span><span class="h">-</span></div>
<div class="ln cm" style="left:60.6px;top:504.46px">include the Glitch button to show what</div>
<div class="ln cm" style="left:60.6px;top:530.89px">the webpage is about and to make it</div>
<div class="ln cm" style="left:60.6px;top:557.32px">easier for folks to view source and</div>
<div class="ln cm" style="left:60.6px;top:583.74px">remix</div>
<div class="ln cm" style="left:60.6px;top:610.16px"><span class="h">-</span><span class="h">-</span>&gt;</div>
<div class="ln " style="left:60.6px;top:636.59px">&lt;<span class="g">div</span> <span class="n">class</span>="<span class="v">glitchButton</span>"</div>
<svg class="a" style="left:42.9px;top:642.8px" width="10" height="17" viewBox="0 0 10 17"><path d="M0.3 0.4 L9.2 8.2 L0.3 16 Z" fill="#a6a6a6"/></svg>
<div class="ln " style="left:60.6px;top:663.01px"><span class="n">style</span>="<span class="v">position:fixed;top:20px;</span></div>
<div class="ln " style="left:60.6px;top:689.44px"><span class="v">right:20px;</span>"&gt;<span style="display:inline-block;width:29.8px"></span>&lt;/<span class="g">div</span>&gt;</div>
<div class="dots" style="left:212.4px;top:696.7px;width:21.8px;height:15px">…</div>
</div>
<div class="a" style="left:499px;top:590px;width:12px;height:705px;background:#fafafa;border-left:1px solid #e7e7e7"></div>
<div class="a" style="left:503px;top:591px;width:8px;height:591px;border-radius:4px;background:#c1c1c1"></div>
<div class="a" style="left:0;top:1295px;width:511px;height:29px;background:#fcfcfc;border-top:1px solid #dddde0"></div>
<div class="t" style="left:17.80px;top:1304.83px;font-size:20.4px;line-height:20.4px;color:#38383d;letter-spacing:0.087px;">html</div>
<svg class="a" style="left:66px;top:1306px" width="14" height="16" viewBox="66 1306 14 16"><path d="M69.6 1309.4 L75.4 1314.8 L69.6 1320.2" fill="none" stroke="#9a9aa0" stroke-width="1.9"/></svg>
<div class="t" style="left:89.20px;top:1304.83px;font-size:20.4px;line-height:20.4px;color:#0b63d6;letter-spacing:0.088px;">body</div>
<div class="a" style="left:511px;top:549px;width:4px;height:775px;background:#dddddd"></div>
<div class="a" style="left:515px;top:549px;width:695px;height:41px;background:#f9f9fa;border-bottom:1px solid #dddde0"></div>
<div class="a" style="left:796px;top:549px;width:129px;height:3px;background:#0a7cf0"></div>
<div class="t" style="left:546.50px;top:557.53px;font-size:20.4px;line-height:20.4px;color:#0c0c0d;letter-spacing:0.086px;">Rules</div>
<div class="t" style="left:663.00px;top:557.53px;font-size:20.4px;line-height:20.4px;color:#0c0c0d;letter-spacing:0.840px;">Computed</div>
<div class="t" style="left:827.70px;top:557.53px;font-size:20.4px;line-height:20.4px;color:#0b63d6;letter-spacing:0.750px;">Layout</div>
<div class="t" style="left:957.50px;top:557.53px;font-size:20.4px;line-height:20.4px;color:#0c0c0d;letter-spacing:0.621px;">Animations</div>
<div class="t" style="left:1127.80px;top:557.53px;font-size:20.4px;line-height:20.4px;color:#0c0c0d;letter-spacing:0.870px;">Fonts</div>
<div class="a" style="left:515px;top:590px;width:695px;height:40px;background:#f9f9fa;border-bottom:1px solid #dddde0"></div>
<div class="t" style="left:545.20px;top:599.83px;font-size:20.4px;line-height:20.4px;color:#0c0c0d;letter-spacing:0.654px;">Grid</div>
<svg class="a" style="left:520px;top:600px" width="24" height="18" viewBox="520 600 24 18"><path d="M524.3 604.8 L540.2 604.8 L532.25 613.4 Z" fill="#a6a6a6"/></svg>
<div class="t" style="left:651.80px;top:650.47px;font-size:18.7px;line-height:18.7px;color:#3a3a40;letter-spacing:0.159px;font-weight:bold;">Overlay Grid</div>
<div class="t" style="left:953.20px;top:650.57px;font-size:18.7px;line-height:18.7px;color:#3a3a40;letter-spacing:0.344px;font-weight:bold;">Grid Display Settings</div>
<div class="cb" style="left:576.2px;top:691.8px"></div>
<div class="cb" style="left:576.2px;top:736.0px"></div>
<div class="t m" style="left:598.3px;top:689.9px;font-size:18.7px;line-height:18.7px;color:#0a6fd8">body</div>
<div class="t m" style="left:598.3px;top:733.9px;font-size:18.7px;line-height:18.7px;color:#0a6fd8">section<span style="color:#d8009c">.container</span></div>
<svg class="a" style="left:640px;top:680px" width="220" height="80" viewBox="640 680 220 80" fill="none">
<rect x="655.8" y="693.9" width="11.2" height="11.2" stroke="#6c6c70" stroke-width="2.6"/>
<path d="M661.4 688.9 V693.5 M661.4 705.5 V710.1 M650.4 699.5 H655.4 M667.4 699.5 H672.4" stroke="#6c6c70" stroke-width="2"/>
<rect x="802.9" y="737.7" width="11.2" height="11.2" stroke="#6c6c70" stroke-width="2.6"/>
<path d="M808.5 732.6999999999999 V737.3 M808.5 749.3 V753.9 M797.5 743.3 H802.5 M814.5 743.3 H819.5" stroke="#6c6c70" stroke-width="2"/>
<circle cx="694.3" cy="700" r="10" fill="#9400ff"/><circle cx="841.9" cy="744.1" r="10" fill="#dd00a9"/>
</svg>
<div class="cb" style="left:950px;top:691.8px"></div>
<div class="t" style="left:972.70px;top:691.67px;font-size:18.7px;line-height:18.7px;color:#3a3a40;letter-spacing:0.523px;">Display line numbers</div>
<div class="cb" style="left:950px;top:735.8px"></div>
<div class="t" style="left:972.70px;top:735.67px;font-size:18.7px;line-height:18.7px;color:#3a3a40;letter-spacing:0.396px;">Display area names</div>
<div class="cb" style="left:950px;top:779.0px"></div>
<div class="t" style="left:972.70px;top:778.87px;font-size:18.7px;line-height:18.7px;color:#3a3a40;letter-spacing:0.608px;">Extend lines infinitely</div>
<div class="a" style="left:515px;top:826px;width:695px;height:40px;background:#f9f9fa;border-top:1px solid #dddde0;border-bottom:1px solid #dddde0"></div>
<svg class="a" style="left:524px;top:834px" width="18" height="24" viewBox="524 834 18 24"><path d="M527.6 838.2 L536.9 845.9 L527.6 853.6 Z" fill="#a6a6a6"/></svg>
<div class="t" style="left:544.80px;top:836.03px;font-size:20.4px;line-height:20.4px;color:#0c0c0d;letter-spacing:0.477px;">Box Model</div>
</body></html>
